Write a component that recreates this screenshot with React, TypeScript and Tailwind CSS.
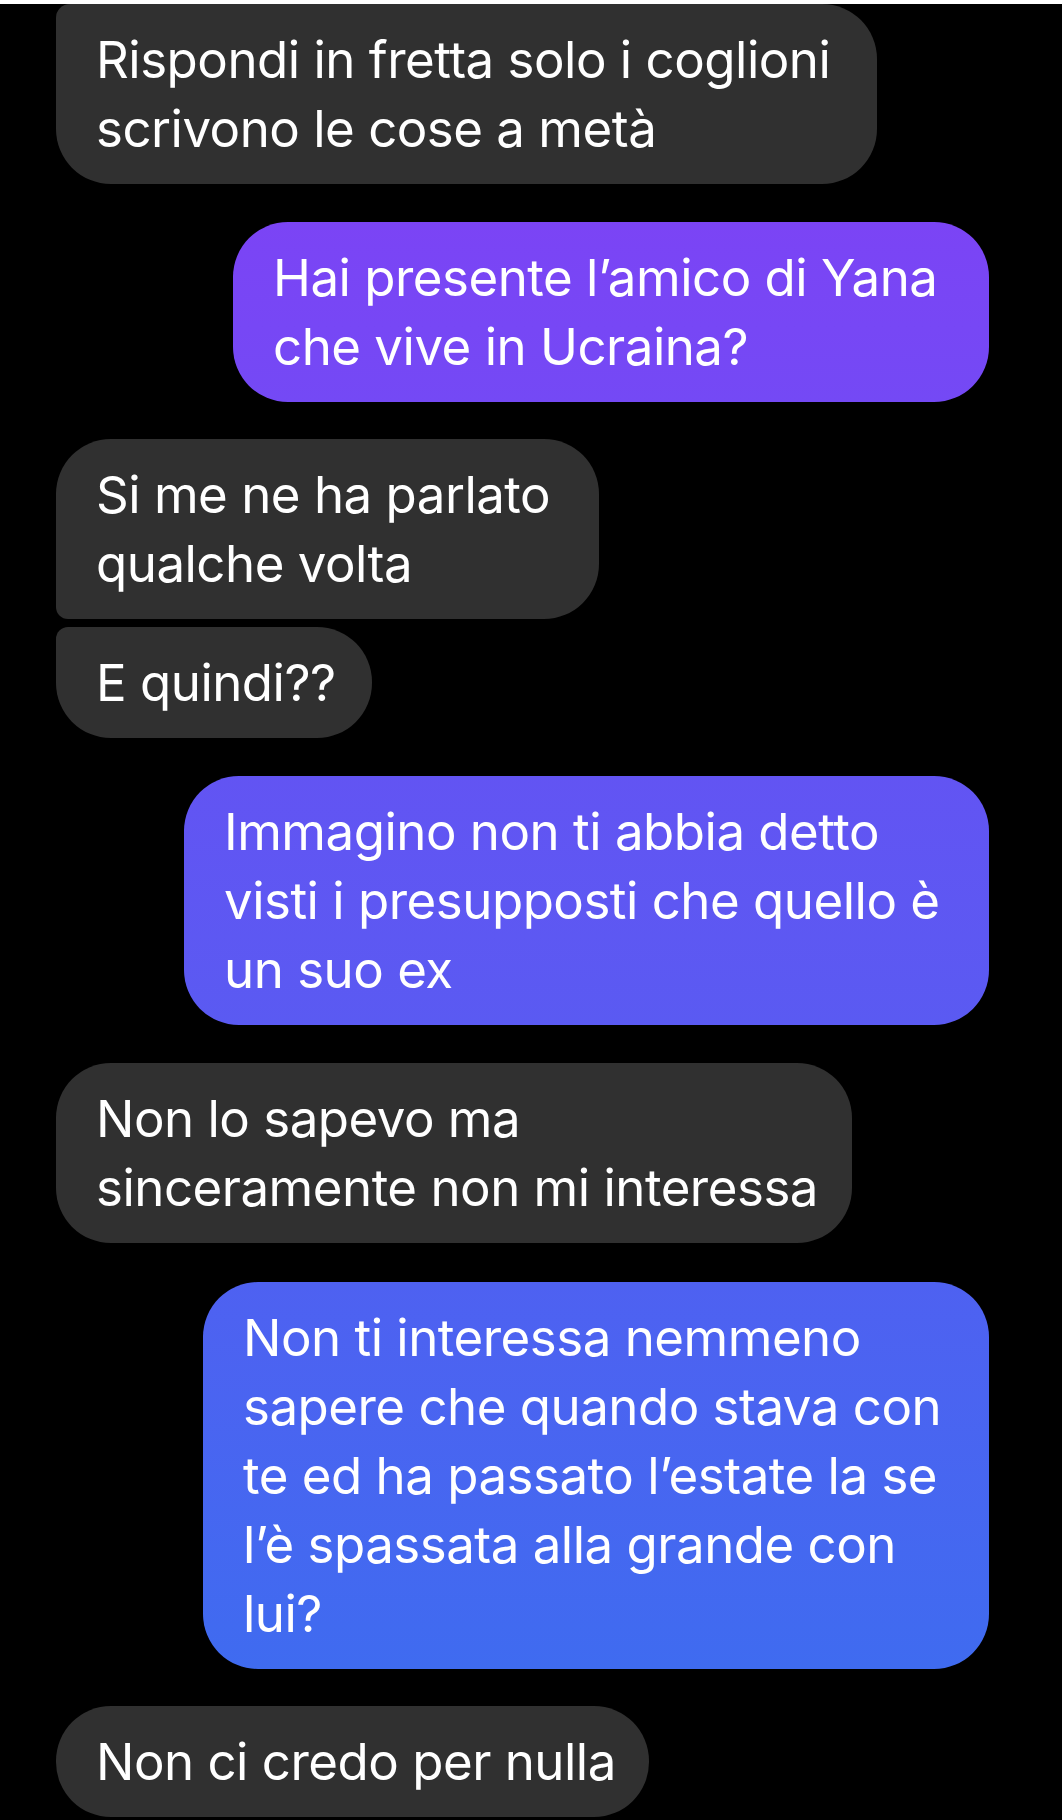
import React from "react";

type Msg = {
  lines: string[];
  mine: boolean;
  width: string;
  shape: string;
  bg: string;
  gap: string;
};

const messages: Msg[] = [
  {
    lines: ["Rispondi in fretta solo i coglioni", "scrivono le cose a metà"],
    mine: false,
    width: "w-[821px]",
    shape: "rounded-[55px] rounded-tl-[14px]",
    bg: "bg-[#303030]",
    gap: "mt-[4px]",
  },
  {
    lines: ["Hai presente l’amico di Yana", "che vive in Ucraina?"],
    mine: true,
    width: "w-[756px]",
    shape: "rounded-[55px]",
    bg: "bg-linear-to-b from-[#7b44f5] to-[#7449f5]",
    gap: "mt-[38px]",
  },
  {
    lines: ["Si me ne ha parlato", "qualche volta"],
    mine: false,
    width: "w-[543px]",
    shape: "rounded-[55px] rounded-bl-[12px]",
    bg: "bg-[#303030]",
    gap: "mt-[37px]",
  },
  {
    lines: ["E quindi??"],
    mine: false,
    width: "w-[316px]",
    shape: "rounded-[55px] rounded-tl-[12px]",
    bg: "bg-[#303030]",
    gap: "mt-[8px]",
  },
  {
    lines: [
      "Immagino non ti abbia detto",
      "visti i presupposti che quello è",
      "un suo ex",
    ],
    mine: true,
    width: "w-[805px]",
    shape: "rounded-[55px]",
    bg: "bg-linear-to-b from-[#6254f3] to-[#5a5af2]",
    gap: "mt-[38px]",
  },
  {
    lines: ["Non lo sapevo ma", "sinceramente non mi interessa"],
    mine: false,
    width: "w-[796px]",
    shape: "rounded-[55px]",
    bg: "bg-[#303030]",
    gap: "mt-[38px]",
  },
  {
    lines: [
      "Non ti interessa nemmeno",
      "sapere che quando stava con",
      "te ed ha passato l’estate la se",
      "l’è spassata alla grande con",
      "lui?",
    ],
    mine: true,
    width: "w-[786px]",
    shape: "rounded-[55px]",
    bg: "bg-linear-to-b from-[#4e61f1] to-[#3f6bf0]",
    gap: "mt-[39px]",
  },
  {
    lines: ["Non ci credo per nulla"],
    mine: false,
    width: "w-[593px]",
    shape: "rounded-[55px]",
    bg: "bg-[#303030]",
    gap: "mt-[37px]",
  },
];

function Bubble({ msg }: { msg: Msg }) {
  return (
    <div className={`flex ${msg.mine ? "justify-end" : "justify-start"} ${msg.gap}`}>
      <div
        className={`${msg.width} ${msg.shape} ${msg.bg} px-[40px] pt-[21px] pb-[21px] text-white`}
      >
        {msg.lines.map((line, i) => (
          <div key={i} className="whitespace-nowrap">
            {line}
          </div>
        ))}
      </div>
    </div>
  );
}

export default function App() {
  return (
    <div
      className="min-h-[1820px] w-[1062px] bg-black pl-[56px] pr-[73px] text-[51px] leading-[69px] tracking-[-0.5px]"
      style={{ fontFamily: "Inter, 'Noto Sans', sans-serif" }}
    >
      {messages.map((m, i) => (
        <Bubble key={i} msg={m} />
      ))}
    </div>
  );
}
